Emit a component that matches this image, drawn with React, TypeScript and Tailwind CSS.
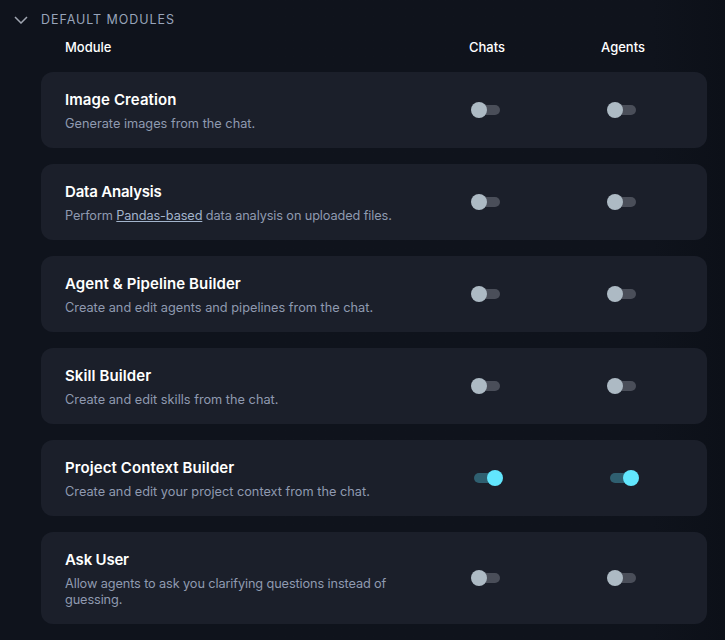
const MODULES = [
  { name: "Image Creation", desc: <>Generate images from the chat.</>, chats: false, agents: false },
  {
    name: "Data Analysis",
    desc: (
      <>
        Perform <a className="underline text-[#a3b4cc]">Pandas-based</a> data analysis on uploaded files.
      </>
    ),
    chats: false,
    agents: false,
    tight: true,
  },
  { name: "Agent & Pipeline Builder", desc: <>Create and edit agents and pipelines from the chat.</>, chats: false, agents: false },
  { name: "Skill Builder", desc: <>Create and edit skills from the chat.</>, chats: false, agents: false },
  { name: "Project Context Builder", desc: <>Create and edit your project context from the chat.</>, chats: true, agents: true },
  {
    name: "Ask User",
    desc: <>Allow agents to ask you clarifying questions instead of guessing.</>,
    chats: false,
    agents: false,
    tight: true,
  },
]

function Toggle({ on }: { on: boolean }) {
  return (
    <div className={`relative h-[10px] w-[26px] rounded-full ${on ? "bg-[#2f5f70]" : "bg-[#4a4e59]"}`}>
      <div
        className={`absolute top-[-3px] h-4 w-4 rounded-full ${on ? "right-[-3px] bg-[#62e6fd]" : "left-[-3px] bg-[#adbac4]"}`}
      />
    </div>
  )
}

export default function App() {
  return (
    <div className="min-h-[640px] bg-linear-to-r from-[#0f131c] from-90% to-[#0c1018] pr-[18px] font-['Inter',sans-serif]">
      <div className="flex h-[39px] items-center pt-px">
        <div className="flex w-[41px] justify-center pl-px">
          <svg width="14" height="8" viewBox="0 0 14 8" fill="none" stroke="#a0a6b1" strokeWidth="1.5">
            <path d="M1 1l6 6 6-6" />
          </svg>
        </div>
        <span className="text-[12.5px] tracking-[0.95px] text-[#98a4ba]">DEFAULT MODULES</span>
      </div>
      <div className="ml-[41px] grid h-[33px] grid-cols-[1fr_136px_136px] items-start pl-6 pr-4 text-[13px] leading-[17px] font-medium text-white">
        <span>Module</span>
        <span className="text-center">Chats</span>
        <span className="text-center">Agents</span>
      </div>
      <div className="ml-[41px] flex flex-col gap-4">
        {MODULES.map((m) => (
          <div
            key={m.name}
            className="grid grid-cols-[1fr_136px_136px] items-center rounded-xl bg-[#1b1f2a] py-4 pl-6 pr-4"
          >
            <div className="flex flex-col gap-1 pr-4">
              <div
                className={`text-[15px] leading-6 font-semibold text-white ${m.tight ? "tracking-[-0.2px]" : "tracking-[0.1px]"}`}
              >
                {m.name}
              </div>
              <div className={`text-[12.75px] leading-4 text-[#8f9ab0] ${m.tight ? "tracking-[-0.12px]" : ""}`}>
                {m.desc}
              </div>
            </div>
            <div className="flex justify-center">
              <Toggle on={m.chats} />
            </div>
            <div className="flex justify-center">
              <Toggle on={m.agents} />
            </div>
          </div>
        ))}
      </div>
    </div>
  )
}
